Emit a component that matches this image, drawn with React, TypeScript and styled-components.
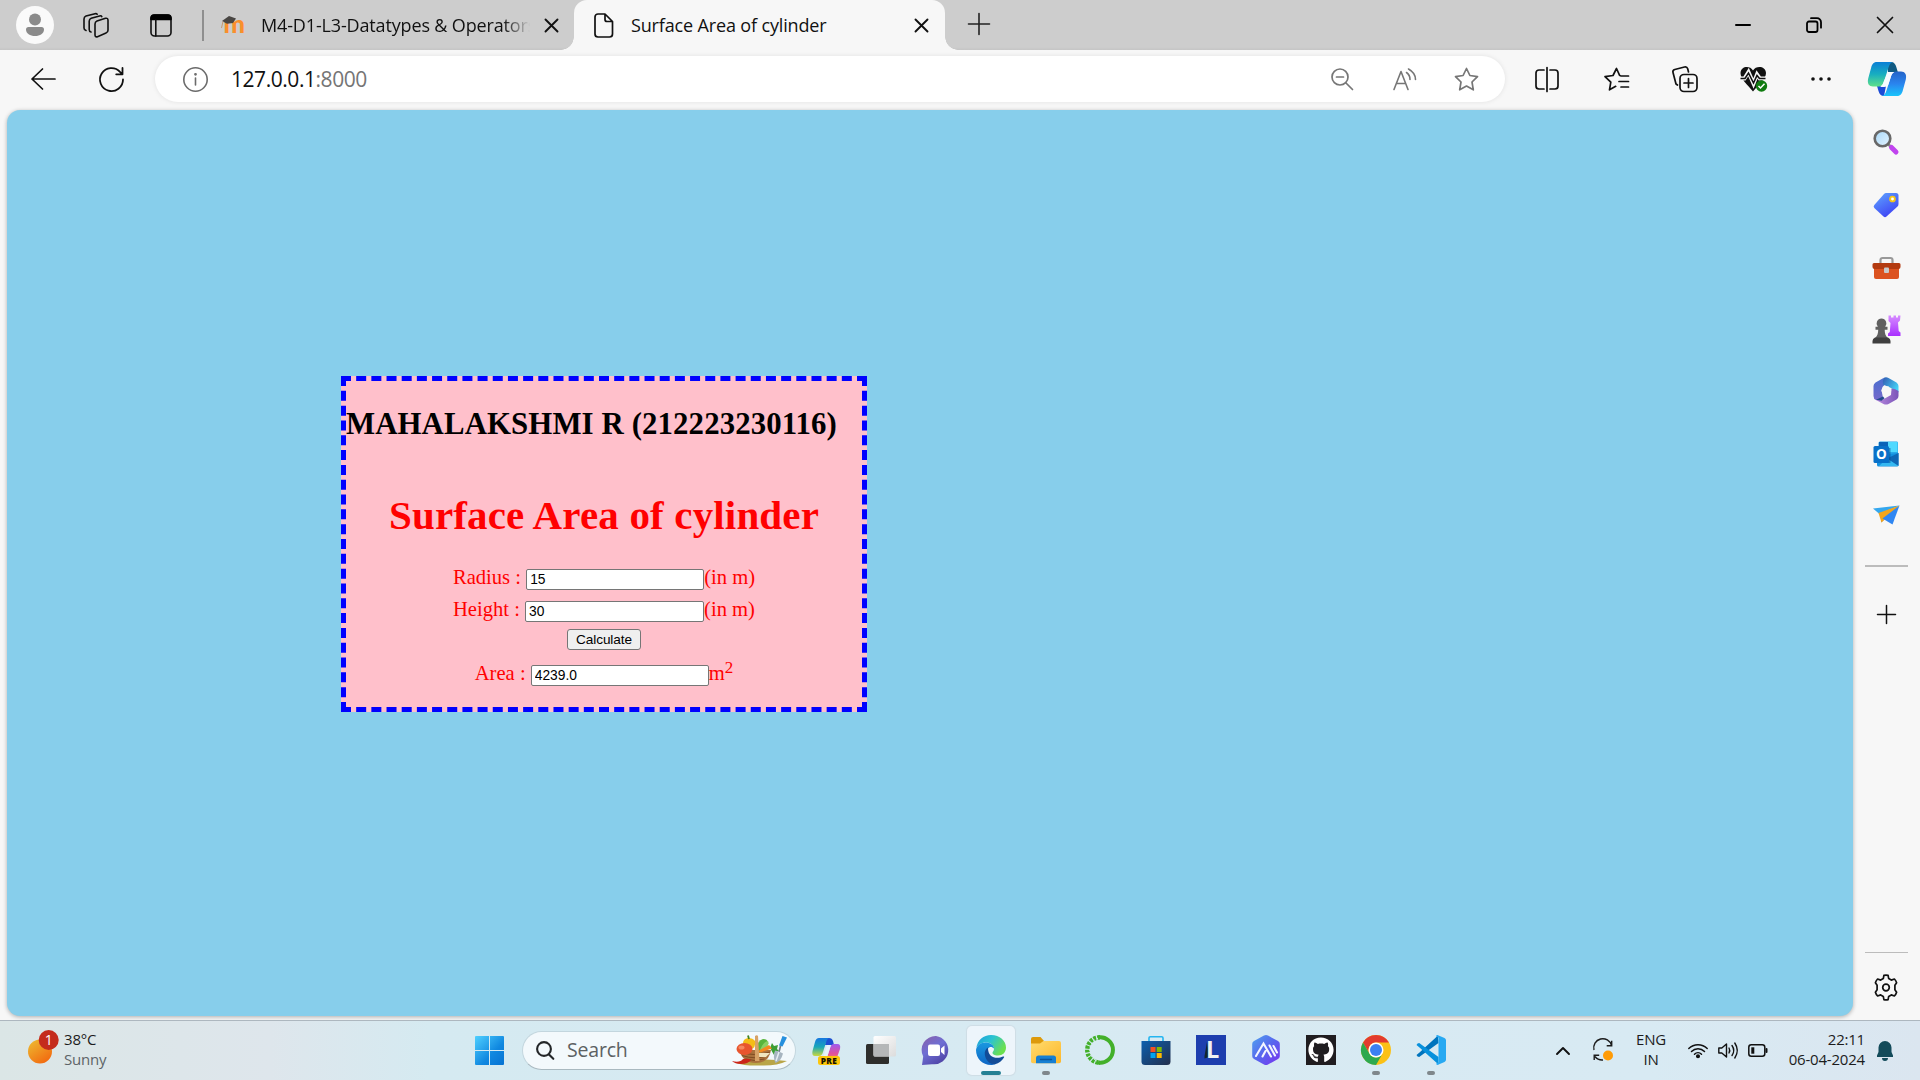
import React from 'react';
import styled, { createGlobalStyle } from 'styled-components';
import { FaGithub } from 'react-icons/fa';

const GlobalStyle = createGlobalStyle`
  * { box-sizing: border-box; }
  body { margin: 0; overflow: hidden; background: #f7f7f7; }
  svg { display: block; overflow: visible; }
`;

const ui = `"Open Sans", "Noto Sans", sans-serif`;
const serif = `"Liberation Serif", "Times New Roman", serif`;
const sans = `"Liberation Sans", Arial, sans-serif`;

const Screen = styled.div`
  width: 1920px;
  height: 1080px;
  display: flex;
  flex-direction: column;
  background: #f7f7f7;
  font-family: ${ui};
  color: #111;
`;

const Svg = styled.svg<{ $ml?: number; $mt?: number }>`
  flex: none;
  margin-left: ${p => p.$ml ?? 0}px;
  margin-top: ${p => p.$mt ?? 0}px;
`;

type GlyphProps = {
  w: number;
  h: number;
  ml?: number;
  mt?: number;
  color?: string;
  sw?: number;
  solid?: boolean;
  children: React.ReactNode;
};

function Glyph({ w, h, ml, mt, color = '#111', sw = 1.7, solid, children }: GlyphProps) {
  return (
    <Svg
      width={w}
      height={h}
      viewBox={`0 0 ${w} ${h}`}
      $ml={ml}
      $mt={mt}
      fill={solid ? color : 'none'}
      stroke={solid ? 'none' : color}
      strokeWidth={sw}
      strokeLinecap="round"
      strokeLinejoin="round"
    >
      {children}
    </Svg>
  );
}

/* ---------- tab strip ---------- */

const TabStrip = styled.header`
  flex: none;
  height: 50px;
  display: flex;
  align-items: center;
  padding: 0 27px 0 16px;
  background: linear-gradient(#cdcdcd 0 47px, #c5c5c5 50px);
`;

const Divider = styled.div`
  width: 2px;
  height: 31px;
  margin-left: 30px;
  background: #8f8f8f;
`;

const Tab = styled.div<{ $active?: boolean }>`
  height: 50px;
  width: ${p => (p.$active ? 371 : 370)}px;
  display: flex;
  align-items: center;
  padding: ${p => (p.$active ? '0 17px 0 20px' : '0 16px')};
  position: relative;
  background: ${p => (p.$active ? '#f7f7f7' : 'transparent')};
  border-radius: 13px 13px 0 0;
  ${p =>
    p.$active &&
    `&::before, &::after {
      content: '';
      position: absolute;
      bottom: 0;
      width: 13px;
      height: 13px;
    }
    &::before { left: -13px; background: radial-gradient(circle at 0 0, transparent 12.5px, #f7f7f7 13px); }
    &::after { right: -13px; background: radial-gradient(circle at 100% 0, transparent 12.5px, #f7f7f7 13px); }`}
`;

const TabTitle = styled.span<{ $fade?: boolean }>`
  flex: 1;
  margin-left: ${p => (p.$fade ? 16 : 18)}px;
  margin-right: ${p => (p.$fade ? 15 : 10)}px;
  overflow: hidden;
  white-space: nowrap;
  font-size: 18px;
  line-height: 26px;
  letter-spacing: -0.15px;
  ${p => p.$fade && 'mask-image: linear-gradient(90deg, #000 90%, transparent 100%);'}
`;

const Cross = ({ s = 13, ml = 0, sw = 1.9 }: { s?: number; ml?: number; sw?: number }) => (
  <Glyph w={s} h={s} ml={ml} sw={sw}>
    <path d={`M.5.5 ${s - 0.5} ${s - 0.5}M${s - 0.5}.5.5 ${s - 0.5}`} />
  </Glyph>
);

const WindowButtons = styled.div`
  margin-left: auto;
  display: flex;
  gap: 55px;
`;

function Tabs() {
  return (
    <TabStrip>
      <Glyph w={38} h={38} solid color="#8b8b8b">
        <circle cx="19" cy="19" r="19" fill="#fafafa" />
        <circle cx="19" cy="13.500" r="6" />
        <path d="M12.500 21h13a2.500 2.500 0 0 1 2.500 2.500c0 4-4 6.500-9 6.500s-9-2.500-9-6.500A2.500 2.500 0 0 1 12.500 21z" />
      </Glyph>
      <Glyph w={26} h={25} ml={29} sw={1.600}>
        <path d="M14 8 22.500 5.300q2.500-.6 2.500 2V17.300q0 2-2 2.800L14.500 23.700q-2.500.8-2.500-2V11q0-2.200 2-3z" />
        <path d="M8 19q-1.800-.3-1.800-2.500V8.300q0-2.200 2-3L16.500 2.900q1.800-.5 2.300.7" />
        <path d="M3 17.500q-2-.5-2-2.500V6q0-2.200 2-3L12 .7q1.500-.3 2.200.5" />
      </Glyph>
      <Glyph w={22} h={23} ml={41} sw={1.600}>
        <rect x="1" y="1" width="20" height="21" rx="3.500" />
        <path d="M1 5.500V4a3 3 0 0 1 3-3h14a3 3 0 0 1 3 3v1.500z" fill="#000" stroke="#000" />
        <path d="M5.800 6v16" />
      </Glyph>
      <Divider />
      <Tab>
        <Svg width="25" height="19" viewBox="0 0 25 19">
          <text x="3.500" y="17" fontFamily="Lato" fontWeight="900" fontSize="25" fill="#f98f2c" textLength="21.500" lengthAdjust="spacingAndGlyphs">m</text>
          <path d="M2 5 9 0l7 2.500-3 4.500-6 .8z" fill="#494643" />
          <path d="M3 5.500 1.500 12" stroke="#c59b72" strokeWidth="1" />
        </Svg>
        <TabTitle $fade>M4-D1-L3-Datatypes &amp; Operators</TabTitle>
        <Cross />
      </Tab>
      <Tab $active>
        <Glyph w={19} h={25} sw={1.700}>
          <path d="M11 1H4a3 3 0 0 0-3 3v17a3 3 0 0 0 3 3h11.500a3 3 0 0 0 3-3V8.500zM11 1v5.500a2 2 0 0 0 2 2h5.500" />
        </Glyph>
        <TabTitle>Surface Area of cylinder</TabTitle>
        <Cross />
      </Tab>
      <Glyph w={22} h={22} ml={23} mt={-2} color="#222" sw={1.600}>
        <path d="M11 .5v21M.5 11h21" />
      </Glyph>
      <WindowButtons>
        <Glyph w={16} h={16} sw={2} color="#000"><path d="M1 8h14" /></Glyph>
        <Glyph w={16} h={16} sw={1.800} color="#000">
          <rect x="1" y="4.500" width="10.500" height="10.500" rx="2" />
          <path d="M5 1.200h6A4 4 0 0 1 15 5.200v5.500" />
        </Glyph>
        <Cross s={16} sw={1.700} />
      </WindowButtons>
    </TabStrip>
  );
}

/* ---------- toolbar ---------- */

const Toolbar = styled.nav`
  flex: none;
  height: 60px;
  display: flex;
  align-items: center;
  padding: 0 0 2px 31px;
`;

const AddressBar = styled.div`
  width: 1350px;
  height: 46px;
  margin-left: 31px;
  padding-left: 28px;
  display: flex;
  align-items: center;
  background: #fff;
  border-radius: 23px;
  box-shadow: 0 0 5px rgba(0, 0, 0, 0.09);
`;

const Url = styled.span`
  width: 1100px;
  margin-left: 23px;
  font-size: 21px;
  line-height: 30px;
  letter-spacing: -0.45px;
  color: #111;
`;
const Port = styled.span`
  color: #757575;
`;

const starPath = 'M12.500 1.500 15.900 8.500 23.500 9.600 18 15 19.300 22.800 12.500 19.100 5.700 22.800 7 15 1.500 9.600 9.100 8.500z';

function CopilotLogo() {
  return (
    <Svg width="38" height="34" viewBox="0 0 38 34" $ml={37}>
      <defs>
        <linearGradient id="cpA" x1="0" y1="0" x2="0" y2="1"><stop offset="0" stopColor="#0a7fd6" /><stop offset=".5" stopColor="#18aec0" /><stop offset="1" stopColor="#5fe08a" /></linearGradient>
        <linearGradient id="cpB" x1="0" y1="0" x2="0" y2="1"><stop offset="0" stopColor="#2463c8" /><stop offset=".5" stopColor="#2a84ee" /><stop offset="1" stopColor="#19c4fb" /></linearGradient>
      </defs>
      <path d="M20 0h3c3 0 4.500 2 5.300 5l1.500 5H20z" fill="#105a82" />
      <path d="M9 24h9l-2 10c-3 0-4.500-1.500-5.500-5z" fill="#1b4bd6" />
      <path d="M9 0h17c-3 0-4.500 2-5.500 5.500l-4.500 14c-1 3-2.500 5-6 5H5c-4 0-6-3-4.800-8l3-11C4.300 1.500 6 0 9 0z" fill="url(#cpA)" />
      <path d="M29 34H13c3 0 4.500-2 5.500-5.500l4.500-14c1-3 2.500-5 6-5h4c4 0 6 3 4.800 8l-3 11C33.700 32.500 32 34 29 34z" fill="url(#cpB)" />
      <path d="M20 10h6c-2 1-2.500 2.500-3.200 5l-2.300 7c-.8 2.200-2 3-4.500 3h-4c2-1 3-3 3.700-5.500z" fill="#f7fbff" />
    </Svg>
  );
}

function BrowserToolbar() {
  return (
    <Toolbar>
      <Glyph w={25} h={22} sw={1.700}><path d="M11.500 1 1 11l10.500 10M1 11h23" /></Glyph>
      <Glyph w={25} h={25} ml={43} sw={1.800}>
        <path d="M24 12.500A11.500 11.500 0 1 1 21 4.800L23.200 7M23.500 1v6.300h-6.300" />
      </Glyph>
      <AddressBar>
        <Glyph w={25} h={25} color="#6b6b6b" sw={1.600}>
          <circle cx="12.500" cy="12.500" r="11.700" />
          <path d="M12.500 11v7" /><circle cx="12.500" cy="7.300" r=".6" fill="#6b6b6b" />
        </Glyph>
        <Url>127.0.0.1<Port>:8000</Port></Url>
        <Glyph w={22} h={22} color="#767676" sw={1.700}>
          <circle cx="9" cy="9" r="8" /><path d="M5.500 9h7M15 15l6.500 6.500" />
        </Glyph>
        <Glyph w={24} h={23} ml={40} color="#767676" sw={1.600}>
          <path d="M1 21.500 8 3.500 15 21.500M3.400 15.500h9.200M13.500 4.500c2.500 1.700 3.500 4 3.500 7M15.500 1c4.500 2.500 7 6 7 10.500" />
        </Glyph>
        <Glyph w={25} h={25} ml={37} color="#767676" sw={1.700}><path d={starPath} /></Glyph>
      </AddressBar>
      <Glyph w={24} h={25} ml={30} sw={1.700}>
        <path d="M9 3H4a3 3 0 0 0-3 3v13a3 3 0 0 0 3 3h5M15 3h5a3 3 0 0 1 3 3v13a3 3 0 0 1-3 3h-5M12 .5v24" />
      </Glyph>
      <Glyph w={25} h={25} ml={45} sw={1.700}>
        <path d="m16 8.500-.4-.1L12.500 1.500 9 8.500 1 9.600l5.800 5.600-1.300 7.600 6.200-3.500M17 9h7.500M15 14.500h9.500M17 20h7.500" />
      </Glyph>
      <Glyph w={26} h={26} ml={43} sw={1.700}>
        <path d="M5.500 19 4 18 1 6.500c-.4-1.500.3-2.600 1.800-3L12.500 1c1.500-.4 2.700.3 3.200 1.800L16.500 6" />
        <rect x="8" y="8.500" width="17" height="17" rx="4" /><path d="M16.500 12.500v9M12 17h9" />
      </Glyph>
      <Svg width="28" height="26" viewBox="0 0 28 26" $ml={42} fill="none">
        <path d="M13 4.500C10-.5 1-.2.5 7c0 6 7 11.500 12.500 18.500C18.500 18.500 26 13 26 7 25.500-.2 16-.5 13 4.500z" fill="#111" />
        <path d="M-.5 12.500h5L8.500 6l5 11.500L17 8.500l2.800 4h6.700" stroke="#f7f7f7" strokeWidth="4" />
        <path d="M.5 12.500h4.500L8.500 7l5 10L17 9.500l2.500 3h6" stroke="#111" strokeWidth="1.600" />
        <circle cx="21.500" cy="20" r="5.700" fill="#107c10" /><path d="m18.500 20 2 2 4-4.200" stroke="#fff" strokeWidth="1.500" />
      </Svg>
      <Glyph w={20} h={6} ml={43} solid><circle cx="2" cy="3" r="1.800" /><circle cx="10" cy="3" r="1.800" /><circle cx="18" cy="3" r="1.800" /></Glyph>
      <CopilotLogo />
    </Toolbar>
  );
}

/* ---------- page ---------- */

const Body = styled.div`
  flex: none;
  height: 910px;
  display: flex;
  padding: 0 0 4px 7px;
`;

const Page = styled.main`
  width: 1846px;
  height: 906px;
  padding: 266px 0 0 334px;
  background: #87ceeb;
  border-radius: 13px;
  box-shadow: 0 1px 4px rgba(0, 0, 0, 0.3);
`;

const Card = styled.section`
  width: 526px;
  height: 336px;
  border: 5px dashed #00f;
  background: #ffc0cb;
  display: flex;
  flex-direction: column;
  align-items: center;
  font-family: ${serif};
  font-size: 20.600px;
  color: #f00;
`;

const Owner = styled.h2`
  align-self: flex-start;
  margin: 25px 0 0;
  font-size: 30.800px;
  line-height: 36px;
  letter-spacing: 0.12px;
  color: #000;
  white-space: nowrap;
`;

const Title = styled.h1`
  margin: 50px 0 0;
  font-size: 41px;
  line-height: 46px;
  letter-spacing: 0.16px;
  white-space: nowrap;
`;

const Row = styled.div<{ $mt: number }>`
  display: flex;
  align-items: center;
  height: 22px;
  margin-top: ${p => p.$mt}px;
  line-height: 22px;
  white-space: pre;
`;

const RowText = styled.span`
  margin-top: -4px;
`;

const Field = styled.input<{ $w?: number }>`
  width: ${p => p.$w ?? 178}px;
  height: 21px;
  margin: 0;
  padding: 0 3px;
  border: 1px solid #767676;
  border-radius: 2px;
  background: #fff;
  color: #000;
  font-family: ${sans};
  font-size: 13.800px;
  outline: none;
`;

const Calc = styled.button`
  width: 74px;
  height: 21px;
  margin: 7px 0 0;
  padding: 0;
  border: 1px solid #767676;
  border-radius: 3px;
  background: #efefef;
  color: #000;
  font-family: ${sans};
  font-size: 13.600px;
  letter-spacing: -0.1px;
  line-height: 18px;
`;

const Sup = styled.sup`
  font-size: 17px;
  line-height: 0;
  vertical-align: 7px;
`;

function CylinderCard() {
  return (
    <Card>
      <Owner>MAHALAKSHMI R (212223230116)</Owner>
      <Title>Surface Area of cylinder</Title>
      <Row $mt={30}><RowText>{'Radius : '}</RowText><Field defaultValue="15" /><RowText>(in m)</RowText></Row>
      <Row $mt={10}><RowText>{'Height : '}</RowText><Field $w={179} defaultValue="30" /><RowText>(in m)</RowText></Row>
      <Calc>Calculate</Calc>
      <Row $mt={14}><RowText>{'Area : '}</RowText><Field defaultValue="4239.0" /><RowText>m<Sup>2</Sup></RowText></Row>
    </Card>
  );
}

/* ---------- sidebar ---------- */

const Sidebar = styled.aside`
  width: 66px;
  height: 910px;
  padding-top: 1px;
  display: flex;
  flex-direction: column;
  align-items: center;
`;

const SideItem = styled.div<{ $h?: number }>`
  height: ${p => p.$h ?? 62.3}px;
  display: flex;
  align-items: center;
  justify-content: center;
`;

const SideRule = styled.div<{ $mt?: string; $h: number }>`
  width: 43px;
  height: ${p => p.$h}px;
  margin-top: ${p => p.$mt};
  background: #bcbcbc;
`;

function EdgeSidebar() {
  return (
    <Sidebar>
      <SideItem>
        <Svg width="26" height="26" viewBox="0 0 26 26">
          <defs><linearGradient id="lens" x1="0" y1="0" x2="1" y2="1"><stop stopColor="#a9d8f8" /><stop offset="1" stopColor="#e3f3fe" /></linearGradient></defs>
          <path d="m15.500 15.500 4 4" stroke="#8a8a8a" strokeWidth="2.500" />
          <circle cx="9.500" cy="9.500" r="7.800" fill="url(#lens)" stroke="#686868" strokeWidth="2.600" />
          <path d="m18.500 18.500 4.500 4.500" stroke="#c044ee" strokeWidth="5" strokeLinecap="round" />
        </Svg>
      </SideItem>
      <SideItem>
        <Svg width="26" height="26" viewBox="0 0 26 26" $mt={2}>
          <defs><linearGradient id="tag" x1="0" y1="0" x2=".6" y2="1"><stop stopColor="#5fa8ff" /><stop offset="1" stopColor="#3f44f4" /></linearGradient></defs>
          <path d="M13 1h10q2.500 0 2.500 2.500V12q0 1.500-1 2.500L13.500 24.500q-1.500 1.300-3 0L1.300 16q-1.300-1.500 0-3L11 2q1-1 2-1z" fill="url(#tag)" />
          <circle cx="19.500" cy="7" r="2.400" fill="#fff" stroke="#f5c518" strokeWidth="1.900" />
        </Svg>
      </SideItem>
      <SideItem>
        <Svg width="29" height="23" viewBox="0 0 29 23" $mt={3}>
          <path d="M8.500 7V3a2 2 0 0 1 2-2h8a2 2 0 0 1 2 2v4" fill="none" stroke="#999" strokeWidth="2.200" />
          <path d="M2 11h25v9a2 2 0 0 1-2 2H4a2 2 0 0 1-2-2z" fill="#dc5320" />
          <path d="M2 6h25a1.500 1.500 0 0 1 1.500 1.500V10q0 2-2 2h-24Q.5 12 .5 10V7.500A1.500 1.500 0 0 1 2 6z" fill="#b33b10" />
          <rect x="12" y="10.500" width="5" height="5.500" rx="1" fill="#c9c9c9" />
        </Svg>
      </SideItem>
      <SideItem>
        <Svg width="29" height="29" viewBox="0 0 29 29">
          <defs><linearGradient id="rook" x2="0" y2="1"><stop stopColor="#d68cff" /><stop offset="1" stopColor="#a92fff" /></linearGradient></defs>
          <path d="M16.500.5h2.500v2h2.500v-2h2.500v2h2v-2h2.500l-.5 5-2 2 .7 8.500 1.800 1.500V21H16v-2.500l1.800-1.500.7-9-2-2z" fill="url(#rook)" />
          <path d="M9.500 3.500a5 5 0 0 1 3.700 8.300h2.300v3h-2.800c0 3.500.8 6.200 3 8.200h-12.500c2.200-2 3-4.700 3-8.200H3.500v-3h2.300A5 5 0 0 1 9.500 3.500z" fill="#606060" />
          <path d="M3 22.500h13q2.500 1.200 2.500 3.500v2.500H.5V26q0-2.300 2.500-3.500z" fill="#3f3f3f" />
        </Svg>
      </SideItem>
      <SideItem>
        <Svg width="26" height="28" viewBox="0 0 26 28">
          <defs>
            <linearGradient id="mA" x2="0" y2="1"><stop stopColor="#4a6fd0" /><stop offset="1" stopColor="#7569cb" /></linearGradient>
            <linearGradient id="mB" y2=".6"><stop stopColor="#315ab3" /><stop offset="1" stopColor="#44d1f5" /></linearGradient>
            <linearGradient id="mC"><stop stopColor="#b889df" /><stop offset="1" stopColor="#7a55b8" /></linearGradient>
          </defs>
          <path d="M10.500 1 2.500 5.500Q.5 7 .5 9v10q0 3 2.500 4 4 1.500 7-2l-1.500-8q0-3 3-5z" fill="url(#mA)" />
          <path d="M10.500 1q2.500-1.500 5 0l8 4.500q2 1.500 2 3.500v6.500L18 11l-8-3.500q-.5-4 .5-6.500z" fill="url(#mB)" />
          <path d="M25.500 14v5q0 2-2 3.500l-8 4.500q-2.500 1.200-5 0L3 23l6 0 9-5 .5-6.500q4 0 7 2.500z" fill="url(#mC)" />
          <path d="m3 22.800 7-3.300 1.500 1.800-3 2.500z" fill="#234a8d" />
          <path d="m10.500 9.500 5-.3 2.800 4.600-2.500 4.700h-5l-2.500-4.700z" fill="#f7f7f7" />
        </Svg>
      </SideItem>
      <SideItem>
        <Svg width="26" height="26" viewBox="0 0 26 26">
          <path d="M5.500 2q0-1.500 1.500-1.500h17Q25 .5 25 2v11H5.500z" fill="#28a8ea" />
          <path d="M15 1h9.500v10H15z" fill="#50d9ff" /><path d="M6 1h9v5H6z" fill="#0a63b8" />
          <path d="M4 14 25.500 12v12q0 1.500-1.500 1.500H5.500Q4 25.500 4 24z" fill="#1490df" />
          <path d="m14 17.500 11.500-5.500v13z" fill="#0f66b5" /><path d="m14 17.500 11.500 7.500H6z" fill="#35b8f1" />
          <rect x="7" y="7" width="10.500" height="15" fill="#064f91" opacity=".55" />
          <rect x=".5" y="5" width="15.500" height="17" rx="1.500" fill="#0870c8" />
          <text x="8.300" y="18" textAnchor="middle" fontFamily="Open Sans" fontWeight="700" fontSize="13.500" fill="#fff">O</text>
        </Svg>
      </SideItem>
      <SideItem>
        <Svg width="27" height="20" viewBox="0 0 27 20" $mt={-2}>
          <path d="M0 3.500 26.500.5 6.500 9z" fill="#34a7ee" />
          <path d="m8 17.500 2-6 3 1.500z" fill="#154b96" />
          <path d="m5.500 8 21-7.500L8.500 17.500z" fill="#f4a51a" />
          <path d="m9.500 13.500 17-13-7 19z" fill="#2f86f2" />
        </Svg>
      </SideItem>
      <SideRule $mt="18px" $h={2} />
      <SideItem $h={95}>
        <Glyph w={19} h={19} sw={1.500}><path d="M9.500.5v18M.5 9.500h18" /></Glyph>
      </SideItem>
      <SideRule $mt="auto" $h={1} />
      <SideItem $h={67}>
        <Glyph w={26} h={27} mt={2} sw={1.700}>
          <circle cx="13" cy="13.500" r="3.300" />
          <path d="M10.300 4.600 10.900 1.400q2.100-.6 4.200 0l.6 3.200 2.600 1.500 3.100-1.100q1.600 1.600 2.200 3.700L21.900 11.200v4.600l1.700 2.500q-.6 2.100-2.200 3.700l-3.100-1.100-2.600 1.500-.6 3.200q-2.100.6-4.200 0l-.6-3.200-2.600-1.500L4.600 22Q3 20.400 2.400 18.300L4.100 15.800v-4.600L2.400 8.700Q3 6.600 4.600 5l3.100 1.100z" />
        </Glyph>
      </SideItem>
    </Sidebar>
  );
}

/* ---------- taskbar ---------- */

const Taskbar = styled.footer`
  flex: none;
  height: 60px;
  display: flex;
  align-items: center;
  border-top: 1px solid #adb7bf;
  background: linear-gradient(90deg, #dbe6e6 0, #dee6ec 270px, #d5eaf1 430px, #d7eaf2 1000px, #d8eaf3 1650px, #dbe6f0 1920px);
  color: #1c1c1c;
  font-size: 15px;
  line-height: 20px;
  letter-spacing: -0.2px;
`;

const Weather = styled.div`
  display: flex;
  width: 447px;
  margin-left: 28px;
`;

const Lines = styled.div<{ $w?: number; $ml?: number; $align?: string }>`
  width: ${p => (p.$w ? `${p.$w}px` : 'auto')};
  margin: -3px 0 0 ${p => p.$ml ?? 0}px;
  text-align: ${p => p.$align ?? 'left'};
  display: flex;
  flex-direction: column;
  white-space: nowrap;
`;

const Muted = styled.span`
  color: #5d6467;
`;

const SearchPill = styled.div`
  width: 274px;
  height: 39px;
  margin: -1px 0 0 18px;
  padding: 0 7px 0 13px;
  display: flex;
  align-items: center;
  background: #f3f9fc;
  border: 1px solid #c3d6de;
  border-bottom-color: #a9b9c0;
  border-radius: 20px;
`;

const SearchText = styled.span`
  flex: 1;
  margin-left: 13px;
  font-size: 19.500px;
  line-height: 26px;
  letter-spacing: -0.2px;
  color: #5c6163;
`;

const Apps = styled.div`
  display: flex;
  margin-left: 2px;
`;

const AppCell = styled.div`
  width: 55px;
  height: 59px;
  display: flex;
  justify-content: center;
`;

const AppTile = styled.div<{ $active?: boolean }>`
  width: 48px;
  height: 49px;
  margin-top: 5px;
  display: flex;
  flex-direction: column;
  align-items: center;
  justify-content: space-between;
  padding-top: 9px;
  border-radius: 5px;
  background: ${p => (p.$active ? '#edf5fb' : 'transparent')};
  box-shadow: ${p => (p.$active ? '0 0 1px 1px #cfdde5' : 'none')};
`;

const Running = styled.i<{ $active?: boolean }>`
  width: ${p => (p.$active ? 20 : 8)}px;
  height: 4px;
  border-radius: 2px;
  background: ${p => (p.$active ? '#258094' : '#7f878b')};
`;

const Tray = styled.div`
  display: flex;
  align-items: center;
  margin-left: 98px;
`;

function AppIcon({ children }: { children: React.ReactNode }) {
  return <Svg width="30" height="30" viewBox="0 0 30 30">{children}</Svg>;
}

const apps: { name: string; run?: boolean; active?: boolean; icon: React.ReactNode }[] = [
  {
    name: 'copilot',
    icon: (
      <>
        <defs>
          <linearGradient id="tA" x2="0" y2="1"><stop stopColor="#1677e0" /><stop offset=".5" stopColor="#18a7b8" /><stop offset="1" stopColor="#c9d83e" /></linearGradient>
          <linearGradient id="tB" x2="0" y2="1"><stop stopColor="#9f5bf0" /><stop offset=".6" stopColor="#e0529c" /><stop offset="1" stopColor="#f58b5b" /></linearGradient>
        </defs>
        <path d="M15 3h3q3 0 4 3l1 4h-9z" fill="#1d4fd2" />
        <path d="M8 3h11q-2.500 0-3.500 3l-3.500 11q-1 4-4 4H4q-3.500 0-2.500-5l2.500-9Q5 3 8 3z" fill="url(#tA)" />
        <path d="M24 25H13q2.500 0 3.500-4l2.500-8q1-4 4-4h3.500q3.500 0 2.500 5l-2.500 7q-1 4-2.500 4z" fill="url(#tB)" />
        <path d="M16 10h4l-3.500 11h-4z" fill="#e6f2fb" />
        <rect x="7" y="21" width="22" height="9" rx="2.500" fill="#fdc60a" />
        <text x="18" y="28.700" textAnchor="middle" fontFamily="Open Sans" fontWeight="800" fontSize="8.300" letterSpacing=".4" fill="#171300">PRE</text>
      </>
    ),
  },
  {
    name: 'task view',
    icon: (
      <>
        <defs><linearGradient id="tv" x2="1" y2="1"><stop stopColor="#fff" /><stop offset="1" stopColor="#dcdcdc" /></linearGradient></defs>
        <rect x="0" y="9" width="23" height="20" rx="1.500" fill="#2e2e2c" />
        <rect x="7.500" y="1" width="22.500" height="20.500" rx="1.500" fill="url(#tv)" />
        <path d="M7.500 9H23v12.500H9q-1.500 0-1.500-1.500z" fill="#b5b7b8" />
      </>
    ),
  },
  {
    name: 'chat',
    icon: (
      <>
        <defs><linearGradient id="ch" x2=".6" y2="1"><stop stopColor="#8a5fa8" /><stop offset=".5" stopColor="#6f6fd4" /><stop offset="1" stopColor="#5146a8" /></linearGradient></defs>
        <path d="M15 1a14 14 0 1 1-4 28.200L1 30l1.200-8.500A14 14 0 0 1 15 1z" fill="url(#ch)" />
        <rect x="7" y="9.500" width="12" height="11.500" rx="2" fill="#fff" /><path d="m20 13.500 3.500-3v9.500l-3.500-3z" fill="#fff" />
      </>
    ),
  },
  {
    name: 'edge',
    run: true,
    active: true,
    icon: (
      <>
        <defs>
          <linearGradient id="eA" x2="1" y2=".5"><stop stopColor="#1b9ddb" /><stop offset=".5" stopColor="#2bc3d2" /><stop offset="1" stopColor="#6be04e" /></linearGradient>
          <linearGradient id="eB" x2="0" y2="1"><stop stopColor="#1998e0" /><stop offset="1" stopColor="#0f66c5" /></linearGradient>
        </defs>
        <path d="M.3 13C1.500 5 7.500 0 15 0c9 0 15 6 15 12.500 0 5-3.500 8-8 8-4 0-5.500-1.500-5.500-2.700 0-1 1.500-1.500 1.500-4C18 10 14.500 7.500 10 7.500 5 7.500 1.500 10 .3 13z" fill="url(#eA)" />
        <path d="M0 15C.5 10.500 4.500 7.500 9.500 7.500c5 0 8.500 2.500 8.500 6-3-3.500-7.500-1-7.500 4.500 0 6 4 10.500 9 11-2 .8-3 1-4.500 1C6.500 30 0 23.500 0 15z" fill="url(#eB)" />
        <path d="M12 12.500c-2.500 1.500-3.500 4-3.200 7C9.500 25.500 14 29.500 19 29.200c4-1 7-3.500 9-6.700.5-.8-.2-1.300-1-.9-2 1-3.500 1.200-5.500 1.200-5.500 0-9.700-3-9.500-10.300z" fill="#124c98" />
      </>
    ),
  },
  {
    name: 'files',
    run: true,
    icon: (
      <>
        <defs><linearGradient id="fl" x2="1" y2="1"><stop stopColor="#ffdc70" /><stop offset="1" stopColor="#fdb72a" /></linearGradient></defs>
        <path d="M0 4q0-2 2-2h7.500l3.500 4v6H0z" fill="#dd9a0b" />
        <path d="M0 8.500h9L12.500 6H28q2 0 2 2v18.500q0 1.800-2 1.800H2q-2 0-2-1.800z" fill="url(#fl)" />
        <path d="M5 28.300V23q0-2.500 2.500-2.500h15Q25 20.500 25 23v5.300z" fill="#167fd2" /><path d="M9.500 24.500h11" stroke="#0b559b" strokeWidth="1.300" strokeLinecap="round" />
      </>
    ),
  },
  {
    name: 'anaconda',
    icon: (
      <>
        <path d="M12 2.500A12.700 12.700 0 1 1 12 27.500" fill="none" stroke="#43b02a" strokeWidth="4" />
        <path d="M14 2.300A12.700 12.700 0 0 0 14 27.700" fill="none" stroke="#43b02a" strokeWidth="4.500" strokeDasharray="2.800 1.100" />
        <path d="M12 3.300A12.200 12.200 0 0 0 11 26" fill="none" stroke="#d7eaf2" strokeWidth="1" strokeDasharray="2 1.500" />
      </>
    ),
  },
  {
    name: 'store',
    icon: (
      <>
        <defs><linearGradient id="st" x2="1" y2="1"><stop stopColor="#0c5fae" /><stop offset="1" stopColor="#232f4c" /></linearGradient></defs>
        <path d="M8 7V3q0-1.300 1.300-1.300h11.400Q22 1.700 22 3v4" fill="none" stroke="#24b5f0" strokeWidth="1.600" />
        <path d="M.5 6h29v20.500q0 3.500-3.500 3.500H4Q.5 30 .5 26.500z" fill="url(#st)" />
        <path d="M9.500 12h5v5h-5z" fill="#f25022" /><path d="M15.700 12h5v5h-5z" fill="#7fba00" /><path d="M9.500 18h5v5h-5z" fill="#00a4ef" /><path d="M15.700 18h5v5h-5z" fill="#ffb900" />
      </>
    ),
  },
  {
    name: 'L',
    icon: (
      <>
        <path d="M0 0h30v30H0z" fill="#1d3eae" />
        <path d="m11 7-2.500 14v2.500L13 22z" fill="#12252f" />
        <text x="10" y="23" fontFamily="Open Sans" fontWeight="700" fontSize="23.500" fill="#f1f1f1">L</text>
      </>
    ),
  },
  {
    name: 'hexagon',
    icon: (
      <>
        <defs><linearGradient id="hx" x2="1" y2="1"><stop stopColor="#4fa3ee" /><stop offset=".5" stopColor="#5865ee" /><stop offset="1" stopColor="#7a32f0" /></linearGradient></defs>
        <path d="M13 .6q2-1 4 0l10 5.500q1.800 1 1.800 3v12q0 2-1.800 3L17 29.500q-2 1-4 0L3 24q-1.800-1-1.800-3V9q0-2 1.800-3z" fill="url(#hx)" />
        <path d="m5 21 7.500-12.500L20 21.500M11.500 21.500l3-5.500M18.500 10.500l5.500 10M22.500 11l3.500 6.500" fill="none" stroke="#f4f6ff" strokeWidth="2.100" strokeLinecap="round" />
      </>
    ),
  },
  {
    name: 'github',
    icon: (
      <>
        <path d="M0 0h30v30H0z" fill="#201d20" />
        <FaGithub x="2" y="2" width="26" height="26" size={26} color="#fff" />
      </>
    ),
  },
  {
    name: 'chrome',
    run: true,
    icon: (
      <>
        <circle cx="15" cy="15" r="15" fill="#fbc116" />
        <path d="M2 7.500a15 15 0 0 1 26 0H15a7.500 7.500 0 0 0-6.500 11.300z" fill="#e33b2e" />
        <path d="M2 7.500A15 15 0 0 0 15 30l6.500-11.300a7.500 7.500 0 0 1-13 0z" fill="#2da94f" />
        <circle cx="15" cy="15" r="7.500" fill="#fff" /><circle cx="15" cy="15" r="6" fill="#3c80f2" />
      </>
    ),
  },
  {
    name: 'code',
    run: true,
    icon: (
      <>
        <path d="M22 .5 3.500 17.500.5 20q.8 2 2.700 2L22.500 8z" fill="#0074bd" />
        <path d="M.5 10q.8-2 2.700-2L22.500 22v7.500L3.500 12.500z" fill="#0891dc" />
        <path d="M22 .2 28.500 3q1.500.7 1.500 2.200v19.600q0 1.500-1.500 2.200L22 29.800q-1.500.4-2-1l2.500-1.500V2.700L20 1.200q.5-1.400 2-1z" fill="#27a9f2" />
      </>
    ),
  },
];

function WindowsTaskbar() {
  return (
    <Taskbar>
      <Weather>
        <Svg width="31" height="34" viewBox="0 0 31 34" $mt={-2}>
          <defs><linearGradient id="sun" x2=".7" y2="1"><stop stopColor="#edbf32" /><stop offset="1" stopColor="#f26a10" /></linearGradient></defs>
          <circle cx="12" cy="21.500" r="12" fill="url(#sun)" />
          <circle cx="20.700" cy="10" r="10" fill="#c42b1c" />
          <text x="20.700" y="15" textAnchor="middle" fontSize="14" fill="#fff">1</text>
        </Svg>
        <Lines $ml={5}><span>38°C</span><Muted>Sunny</Muted></Lines>
      </Weather>
      <Svg width="29" height="29" viewBox="0 0 29 29">
        <defs><linearGradient id="win" x2="1" y2="1"><stop stopColor="#4fd0ff" /><stop offset=".6" stopColor="#1088e0" /><stop offset="1" stopColor="#0672d2" /></linearGradient></defs>
        <path d="M1 0h13v14H0V1q0-1 1-1zM15 0h13q1 0 1 1v13H15zM0 15h14v14H1q-1 0-1-1zM15 15h14v13q0 1-1 1H15z" fill="url(#win)" />
      </Svg>
      <SearchPill>
        <Glyph w={18} h={19} sw={2.100} color="#232628"><circle cx="8" cy="8" r="6.900" /><path d="m13 13.500 4.300 4.300" /></Glyph>
        <SearchText>Search</SearchText>
        <Svg width="56" height="31" viewBox="0 0 56 31">
          <path d="M4 28q24-6 51-2-10 5-26 4.500Q12 31 4 28z" fill="#b9a548" />
          <path d="M7 15h32q-2 13-15 13T7 15z" fill="#a9713d" />
          <path d="M8 17q14 5 30 0M10 20.500q13 4.500 26 0M13.500 24q9 3 19 0" stroke="#7f4b22" fill="none" />
          <path d="M16 3q5 0 7 3 1 7-4 8-7 0-8-6 0-4 5-5z" fill="#f4bd17" /><path d="m17 4-1-3.500" stroke="#408321" strokeWidth="1.800" />
          <ellipse cx="12.500" cy="14" rx="8" ry="6" fill="#e8552e" /><ellipse cx="9.500" cy="12.500" rx="3" ry="2" fill="#f58860" />
          <path d="M25 13q0-7 6-9 6 0 4 5l-7 9z" fill="#58b53b" /><path d="M28 15q3-8 8-9 2 4-3 8z" fill="#8bd062" />
          <path d="m38 13 2-5 2 3 4-1-1 4 2 2-4 1-1 3z" fill="#3b9e35" />
          <path d="m25 16.500 12-6.500 3 3.500-12 4z" fill="#f48a1e" /><path d="M27 18h11l-4 4h-7z" fill="#f0e4be" />
          <path d="M23 1q2-1.500 3 0l1.500 25H23z" fill="#d7a267" />
          <path d="m50.500 1 4.500 1.500-4.500 9-3.500-1z" fill="#2790de" /><path d="m48.500 11-2 8" stroke="#6f7c86" strokeWidth="1.700" />
          <path d="M43 15.500q5 1 8 3-2 8-7.500 9.500-3-5-.5-12.500z" fill="#a7b5c0" /><path d="m47 17-3 9" stroke="#e6edf2" strokeWidth="1.500" />
          <path d="M0 26q8 2 11-2 6-1 8 1-3 4-10 4-6 0-9-3z" fill="#cb2418" />
        </Svg>
      </SearchPill>
      <Apps>
        {apps.map(a => (
          <AppCell key={a.name}>
            <AppTile $active={a.active}>
              <AppIcon>{a.icon}</AppIcon>
              {a.run && <Running $active={a.active} />}
            </AppTile>
          </AppCell>
        ))}
      </Apps>
      <Tray>
        <Glyph w={14} h={8} sw={1.900}><path d="m1 7 6-6 6 6" /></Glyph>
        <Svg width="21" height="21" viewBox="0 0 21 21" $ml={23} fill="none" stroke="#1c1c1c" strokeWidth="1.400">
          <path d="M1 10A9 9 0 0 1 18.500 5.500M18.700.8v5h-5M2 16.500A9 9 0 0 0 10 20M1.200 20v-4.700h5" />
          <circle cx="15" cy="15.500" r="5" fill="#ff9b06" stroke="none" />
        </Svg>
        <Lines $w={40} $ml={17} $align="center"><span>ENG</span><span>IN</span></Lines>
        <Glyph w={20} h={15} ml={17} sw={1.500}>
          <path d="M.8 5.500a13 13 0 0 1 18.400 0M3.500 8.500a9 9 0 0 1 13 0M6.500 11.200a5 5 0 0 1 7 0" /><circle cx="10" cy="13.300" r="1.300" fill="#111" />
        </Glyph>
        <Glyph w={20} h={17} ml={10} sw={1.400}>
          <path d="M.8 6v5h3l4.700 4V2L3.800 6zM11 6q1.500 2.500 0 5M14 3.500q3.500 5 0 10M16.800 1q5 7.500 0 15" />
        </Glyph>
        <Glyph w={20} h={13} ml={10} sw={1.500}>
          <rect x=".8" y=".8" width="16" height="11.400" rx="2.500" /><path d="M18.500 5v3" strokeWidth="2" /><rect x="3.300" y="3.300" width="3" height="6.400" fill="#111" stroke="none" />
        </Glyph>
        <Lines $w={97} $align="right"><span>22:11</span><span>06-04-2024</span></Lines>
        <Glyph w={16} h={20} ml={12} solid color="#134b5a">
          <path d="M8 0a6.500 6.500 0 0 1 6.500 6.500V11l1.500 3.500V16H0v-1.500L1.500 11V6.500A6.500 6.500 0 0 1 8 0zM5 17h6a3 3 0 0 1-6 0z" />
        </Glyph>
      </Tray>
    </Taskbar>
  );
}

export default function App() {
  return (
    <Screen>
      <GlobalStyle />
      <Tabs />
      <BrowserToolbar />
      <Body>
        <Page><CylinderCard /></Page>
        <EdgeSidebar />
      </Body>
      <WindowsTaskbar />
    </Screen>
  );
}
